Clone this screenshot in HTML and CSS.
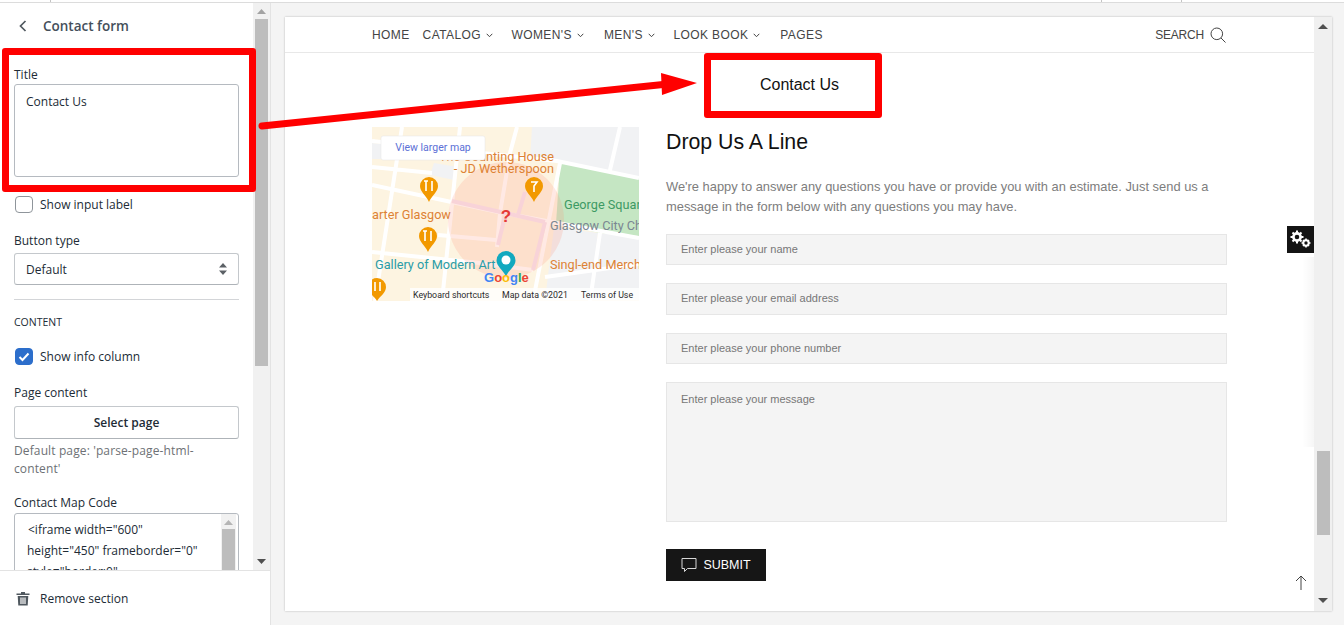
FILE: index.html
```html
<!DOCTYPE html>
<html lang="en">
<head>
<meta charset="utf-8">
<title>Contact form</title>
<link rel="stylesheet" href="styles.css">
</head>
<body>
<div class="topbar"><i class="tick t1"></i><i class="tick t2"></i><i class="tick t3"></i></div>
<div class="workspace">
  <aside class="sidebar">
    <div class="side-main">
      <div class="side-scroll">
        <header class="side-head">
          <svg class="back" width="8" height="12" viewBox="0 0 8 12"><path d="M6.500 1 1.500 6l5 5" fill="none" stroke="#50585f" stroke-width="1.700"/></svg>
          <span>Contact form</span>
        </header>
        <div class="field title-field">
          <label class="lbl">Title</label>
          <div class="textbox tall">Contact Us</div>
        </div>
        <div class="check"><span class="box"></span>Show input label</div>
        <div class="field type-field">
          <label class="lbl">Button type</label>
          <div class="select">Default
            <svg width="8" height="12" viewBox="0 0 8 12"><path d="M4 0 8 4.500H0zM4 12 0 7.500h8z" fill="#5c6166"/></svg>
          </div>
        </div>
        <hr class="rule">
        <div class="caption">CONTENT</div>
        <div class="check info"><span class="box on"><svg width="12" height="10" viewBox="0 0 12 10"><path d="M1.500 5 4.500 8l6-6.500" fill="none" stroke="#fff" stroke-width="2"/></svg></span>Show info column</div>
        <div class="field page-field">
          <label class="lbl">Page content</label>
          <div class="btn">Select page</div>
          <p class="help">Default page: 'parse-page-html-content'</p>
        </div>
        <div class="field map-field">
          <label class="lbl">Contact Map Code</label>
          <div class="textbox code">
            <div class="code-text"><span class="lead">&lt;iframe width="600"</span><br>height="450" frameborder="0"<br>style="border:0"</div>
            <div class="mini-bar"><svg width="9" height="5" viewBox="0 0 9 5"><path d="M4.500 0 9 5H0z" fill="#b5b5b5"/></svg><i></i></div>
          </div>
        </div>
      </div>
      <div class="side-bar">
        <svg width="9" height="5" viewBox="0 0 9 5"><path d="M4.500 0 9 5H0z" fill="#a3a3a3"/></svg>
        <i class="thumb"></i>
        <svg class="down" width="9" height="5" viewBox="0 0 9 5"><path d="M0 0h9L4.500 5z" fill="#505050"/></svg>
      </div>
    </div>
    <footer class="side-foot">
      <svg width="14" height="15" viewBox="0 0 14 15"><path d="M5 1h4v1.500h4.500V4H.5V2.500H5zM1.700 5h10.600l-.6 9.500H2.300zM4.400 6.500v6.500h1.200V6.500zm4 0v6.500h1.200V6.500zM6.400 6.500v6.500h1.200V6.500z" fill="#50585f" fill-rule="evenodd"/></svg>
      <span>Remove section</span>
    </footer>
  </aside>

  <main class="preview">
    <div class="frame">
      <div class="page">
        <nav class="nav">
          <div class="nav-links">
            <a>HOME</a>
            <a class="drop">CATALOG<svg class="cv" width="7" height="5" viewBox="0 0 7 5"><path d="M.7.800 3.500 3.700 6.300.800" fill="none" stroke="#444" stroke-width="1"/></svg></a>
            <a class="drop wide">WOMEN'S<svg class="cv" width="7" height="5" viewBox="0 0 7 5"><path d="M.7.800 3.500 3.700 6.300.800" fill="none" stroke="#444" stroke-width="1"/></svg></a>
            <a class="drop">MEN'S<svg class="cv" width="7" height="5" viewBox="0 0 7 5"><path d="M.7.800 3.500 3.700 6.300.800" fill="none" stroke="#444" stroke-width="1"/></svg></a>
            <a class="drop wide">LOOK BOOK<svg class="cv" width="7" height="5" viewBox="0 0 7 5"><path d="M.7.800 3.500 3.700 6.300.800" fill="none" stroke="#444" stroke-width="1"/></svg></a>
            <a>PAGES</a>
          </div>
          <div class="nav-search">SEARCH
            <svg width="16" height="16" viewBox="0 0 16 16"><circle cx="6.800" cy="6.800" r="5.800" fill="none" stroke="#444" stroke-width="1"/><path d="m11 11 4.500 4.500" stroke="#444" stroke-width="1"/></svg>
          </div>
        </nav>
        <h1 class="page-title">Contact Us</h1>
        <section class="contact">
          <div class="map">
            <svg width="267" height="174" viewBox="0 0 267 174">
              <rect width="267" height="174" fill="#fdf4e1"/>
              <path d="M160 0h107v51l-79-15-30-3zM228 106l39 5v62h-47zM182 100l44 6-8 67h-45zM0 16l30 3-3 13H0zM62 36l24 4-4 13-24-5z" fill="#f1f2f4"/>
              <path d="M188 36l79 15v58l-39-3-44-9z" fill="#c5e6c3"/>
              <g stroke="#fff" stroke-width="4" fill="none">
                <path d="M0 14 185 34 267 51M0 58 126 85 267 111M0 125 108 136 161 143M30 0 3 174M88 0 70 174M145 0 138 26 128 86 125 120M188 36 161 174M228 106 218 174M248 0 238 43M173 150 267 137M0 40 60 46M66 108l58 5"/>
              </g>
              <circle cx="134" cy="93" r="58" fill="#ff8f78" fill-opacity=".2"/>
              <path d="M80 74 173 95M133 89 126 118M153 65 146 88M173 95 161 143" stroke="#f8d3d8" stroke-width="4" fill="none"/>
              <g font-family="Roboto, 'Liberation Sans', sans-serif" font-size="12.700">
                <g fill="#dd8234">
                  <text x="182" y="34" text-anchor="end">The Counting House</text>
                  <text x="182" y="46" text-anchor="end">- JD Wetherspoon</text>
                  <text x="0" y="92">arter Glasgow</text>
                  <text x="178" y="142">Singl-end Merch</text>
                </g>
                <text x="192" y="82" fill="#3d9a63">George Squar</text>
                <text x="178" y="103" fill="#7b8792">Glasgow City Ch</text>
                <text x="3" y="142" fill="#2a9ca8">Gallery of Modern Art</text>
              </g>
              <text x="134" y="95" text-anchor="middle" font-family="'Liberation Sans', sans-serif" font-weight="700" font-size="17" fill="#e53935">?</text>
              <g fill="#f29900">
                <path d="M57 50a9 9 0 0 1 9 9c0 6-6 9-9 16-3-7-9-10-9-16a9 9 0 0 1 9-9z"/>
                <path d="M56 100a9 9 0 0 1 9 9c0 6-6 9-9 16-3-7-9-10-9-16a9 9 0 0 1 9-9z"/>
                <path d="M162 50a9 9 0 0 1 9 9c0 6-6 9-9 16-3-7-9-10-9-16a9 9 0 0 1 9-9z"/>
                <path d="M5 151a9 9 0 0 1 9 9c0 6-6 9-9 14-3-5-9-8-9-14a9 9 0 0 1 9-9z"/>
              </g>
              <path d="M54 54v10M60 54v10M52 54h4M159 55h6l-3 4v6M53 104v10M59 104v10M51 104h4M3 155v9M8 155v9" stroke="#fff" stroke-width="1.600" fill="none"/>
              <path d="M134 124a9.500 9.500 0 0 1 9.500 9.500c0 6-6.500 9-9.500 16-3-7-9.500-10-9.500-16a9.500 9.500 0 0 1 9.500-9.500z" fill="#12a9bf"/>
              <circle cx="134" cy="133" r="4.500" fill="#fff"/>
              <text x="112" y="155" font-family="'Liberation Sans', sans-serif" font-size="13" font-weight="700"><tspan fill="#4285f4">G</tspan><tspan fill="#ea4335">o</tspan><tspan fill="#fbbc05">o</tspan><tspan fill="#4285f4">g</tspan><tspan fill="#34a853">l</tspan><tspan fill="#ea4335">e</tspan></text>
              <rect x="38" y="161" width="229" height="13" fill="#fff" fill-opacity=".8"/>
              <g font-family="Roboto, 'Liberation Sans', sans-serif" font-size="8.800" fill="#2b2b2b">
                <text x="41" y="171">Keyboard shortcuts</text>
                <text x="130" y="171">Map data ©2021</text>
                <text x="209" y="171">Terms of Use</text>
              </g>
              <rect x="9" y="9" width="104" height="24" rx="2" fill="#fff" stroke="#e4e4e4" stroke-width=".5"/>
              <text x="61" y="24" text-anchor="middle" font-family="Roboto, 'Liberation Sans', sans-serif" font-size="10.500" fill="#5c70d6">View larger map</text>
            </svg>
          </div>
          <div class="form-col">
            <h2>Drop Us A Line</h2>
            <p class="intro">We're happy to answer any questions you have or provide you with an estimate. Just send us a message in the form below with any questions you may have.</p>
            <div class="input i1">Enter please your name</div>
            <div class="input i2">Enter please your email address</div>
            <div class="input i3">Enter please your phone number</div>
            <div class="input area">Enter please your message</div>
            <div class="submit">
              <svg width="16" height="16" viewBox="0 0 16 16"><path d="M1 1.500h14v10H6.500l-3 3v-3H1z" fill="none" stroke="#d8d8d8" stroke-width="1"/></svg>
              SUBMIT
            </div>
          </div>
        </section>
        <div class="fade"></div>
        <div class="gears">
          <svg width="23" height="19" viewBox="0 0 23 19">
            <g fill="none" stroke="#fff">
              <circle cx="8" cy="7" r="3.600" stroke-width="2.600"/>
              <path d="M8 .5v2.500M8 11v2.500M1.500 7H4M12 7h2.500M3.500 2.500 5 4M11 10l1.500 1.500M3.500 11.500 5 10M11 4l1.500-1.500" stroke-width="2"/>
              <circle cx="17" cy="13" r="2.700" stroke-width="2"/>
              <path d="M17 8.500v2M17 15.500v2M12.500 13h2M19.500 13h2M14 10l1 1M19 15l1 1M14 16l1-1M19 11l1-1" stroke-width="1.600"/>
            </g>
          </svg>
        </div>
        <svg class="to-top" width="12" height="15" viewBox="0 0 12 15"><path d="M6 15V1M1 6l5-5 5 5" fill="none" stroke="#444" stroke-width="1"/></svg>
      </div>
      <div class="frame-bar">
        <svg width="10" height="5" viewBox="0 0 10 5"><path d="M5 0l5 5H0z" fill="#505050"/></svg>
        <i class="frame-thumb"></i>
        <svg class="frame-down" width="10" height="5" viewBox="0 0 10 5"><path d="M0 0h10L5 5z" fill="#505050"/></svg>
      </div>
    </div>
  </main>
</div>

<div class="mark mark-left"></div>
<div class="mark mark-right"></div>
<svg class="arrow" width="700" height="140" viewBox="0 0 700 140">
  <path d="M262 126 668 84" stroke="#f00" stroke-width="7" stroke-linecap="round"/>
  <path d="M661 73 697 83 662 95z" fill="#f00"/>
</svg>
</body>
</html>
```
FILE: styles.css
```css
* { box-sizing: border-box; }
html, body { margin: 0; height: 100%; overflow: hidden; }
body { background: #f4f4f4; font-family: "Open Sans", "Noto Sans", sans-serif; color: #212b36; position: relative; }

.topbar { height: 3px; background: #fff; border-bottom: 1px solid #dcdcdc; display: flex; }
.tick { display: block; width: 1px; height: 2px; background: #c4c4c4; }
.t1 { margin-left: 50px; }
.t2 { margin-left: 1050px; }
.t3 { margin-left: 79px; }

.workspace { display: flex; height: 622px; }

/* sidebar */
.sidebar { width: 271px; flex: none; background: #fff; border-right: 1px solid #e3e3e3; display: flex; flex-direction: column; }
.side-main { height: 567px; flex: none; display: flex; overflow: hidden; }
.side-scroll { width: 253px; flex: none; padding: 0 14px; overflow: hidden; }
.side-bar { width: 17px; flex: none; background: #f1f1f1; display: flex; flex-direction: column; align-items: center; padding-top: 6px; }
.thumb { display: block; width: 13px; height: 347px; margin-top: 5px; background: #bdbdbd; }
.side-bar .down { margin-top: 193px; }

.side-head { height: 45px; display: flex; align-items: center; gap: 16px; padding-left: 5px; font-size: 13.500px; font-weight: 600; color: #454f5b; }
.lbl { display: block; font-size: 12px; line-height: 16px; color: #212b36; }
.title-field { margin-top: 19px; }
.title-field .lbl { margin-bottom: 1px; }
.textbox { border: 1px solid #b5bac0; border-radius: 3px; font-size: 12px; color: #212b36; padding: 8px 11px; background: #fff; }
.tall { height: 93px; line-height: 18px; }
.check { display: flex; align-items: center; gap: 7px; margin: 19px 0 0 1px; font-size: 12px; line-height: 17px; color: #212b36; }
.box { width: 18px; height: 17px; border: 1px solid #8f959b; border-radius: 4px; background: #fff; display: flex; align-items: center; justify-content: center; }
.box.on { background: #2c6ecb; border-color: #2c6ecb; }
.type-field { margin-top: 20px; }
.type-field .lbl { margin-bottom: 4px; }
.select { height: 32px; border: 1px solid #c4c8cc; border-bottom-color: #aeb3b8; border-radius: 3px; padding: 0 11px; display: flex; align-items: center; justify-content: space-between; font-size: 12px; }
.rule { margin: 14px 0 0; border: 0; border-top: 1px solid #d3d5d8; }
.caption { margin-top: 15px; font-size: 10.500px; line-height: 14px; color: #212b36; }
.check.info { margin-top: 19px; }
.page-field { margin-top: 20px; }
.page-field .lbl { margin-bottom: 5px; }
.btn { height: 33px; border: 1px solid #c4c8cc; border-bottom-color: #aeb3b8; border-radius: 3px; display: flex; align-items: center; justify-content: center; font-size: 12px; font-weight: 600; color: #212b36; }
.help { margin: 3px 0 0; max-width: 200px; font-size: 12px; letter-spacing: .12px; line-height: 18px; color: #6d7175; }
.map-field { margin-top: 17px; }
.map-field .lbl { margin-bottom: 2px; }
.code { height: 120px; display: flex; padding: 0; overflow: hidden; }
.code-text { flex: 1; padding: 5px 0 0 12px; line-height: 21px; white-space: nowrap; overflow: hidden; }
.lead { padding-left: 1px; }
.mini-bar { width: 15px; flex: none; background: #f1f1f1; margin-right: 2px; display: flex; flex-direction: column; align-items: center; padding-top: 6px; }
.mini-bar i { display: block; width: 13px; height: 60px; margin-top: 4px; background: #bdbdbd; }

.side-foot { flex: 1; border-top: 1px solid #e3e3e3; display: flex; align-items: center; gap: 10px; padding: 0 0 0 16px; font-size: 12px; font-weight: 500; color: #212b36; }

/* preview */
.preview { flex: 1; padding: 14px 12px 11px 14px; min-width: 0; }
.frame { height: 594px; display: flex; background: #fff; box-shadow: 0 0 2px rgba(0,0,0,.25); }
.page { flex: 1; min-width: 0; position: relative; overflow: hidden; font-family: "Liberation Sans", Arial, sans-serif; }
.frame-bar { width: 18px; flex: none; background: #f0f0f0; display: flex; flex-direction: column; align-items: center; padding-top: 7px; }
.frame-thumb { display: block; width: 13px; height: 84px; margin-top: 422px; background: #bdbdbd; }
.frame-down { margin-top: 63px; }

.nav { height: 36px; border-bottom: 1px solid #e8e8e8; padding: 0 88px 0 87px; display: flex; align-items: center; justify-content: space-between; font-size: 12px; color: #444; }
.nav-links { display: flex; gap: 13px; }
.nav-links a { letter-spacing: .4px; white-space: nowrap; }
.nav-links .drop { padding-right: 5.500px; }
.nav-links .wide { padding-right: 7px; }
.cv { margin-left: 5px; vertical-align: 1px; }
.nav-search { display: flex; align-items: center; gap: 6px; letter-spacing: -.2px; }

.page-title { margin: 22px 0 0; text-align: center; font-size: 16px; line-height: 20px; font-weight: 400; color: #111; }
.contact { display: flex; gap: 27px; margin: 32px 87px 0; }
.map { width: 267px; height: 174px; flex: none; }
.map svg { display: block; }
.form-col { flex: 1; min-width: 0; padding-top: 1px; }
.form-col h2 { margin: 0; font-size: 21.300px; line-height: 28px; font-weight: 400; color: #111; }
.intro { margin: 21px 0 0; font-size: 12.900px; line-height: 20px; color: #7d7d7d; }
.input { height: 31px; margin-top: 18px; padding: 0 14px; border: 1px solid #e6e6e6; background: #f4f4f4; font-size: 11px; line-height: 28px; color: #777; }
.i1 { margin-top: 17px; }
.i2 { height: 32px; }
.area { height: 140px; padding-top: 7px; line-height: 18px; }
.submit { width: 100px; height: 32px; margin-top: 27px; background: #161616; color: #fff; display: flex; align-items: center; justify-content: center; gap: 6px; font-size: 12.500px; font-weight: 400; }

.fade { position: absolute; right: 0; top: 240px; width: 12px; height: 190px; background: linear-gradient(to right, rgba(0,0,0,0), rgba(0,0,0,.035)); }
.gears { position: absolute; right: 0; top: 209px; width: 27px; height: 27px; background: #141414; display: flex; align-items: center; justify-content: center; }
.to-top { position: absolute; right: 7px; bottom: 21px; }

/* annotations */
.mark { position: absolute; border: 7px solid #f00; border-radius: 3px; }
.mark-left { left: 2px; top: 48px; width: 254px; height: 144px; }
.mark-right { left: 704px; top: 53px; width: 178px; height: 65px; }
.arrow { position: absolute; left: 0; top: 0; pointer-events: none; }
```
